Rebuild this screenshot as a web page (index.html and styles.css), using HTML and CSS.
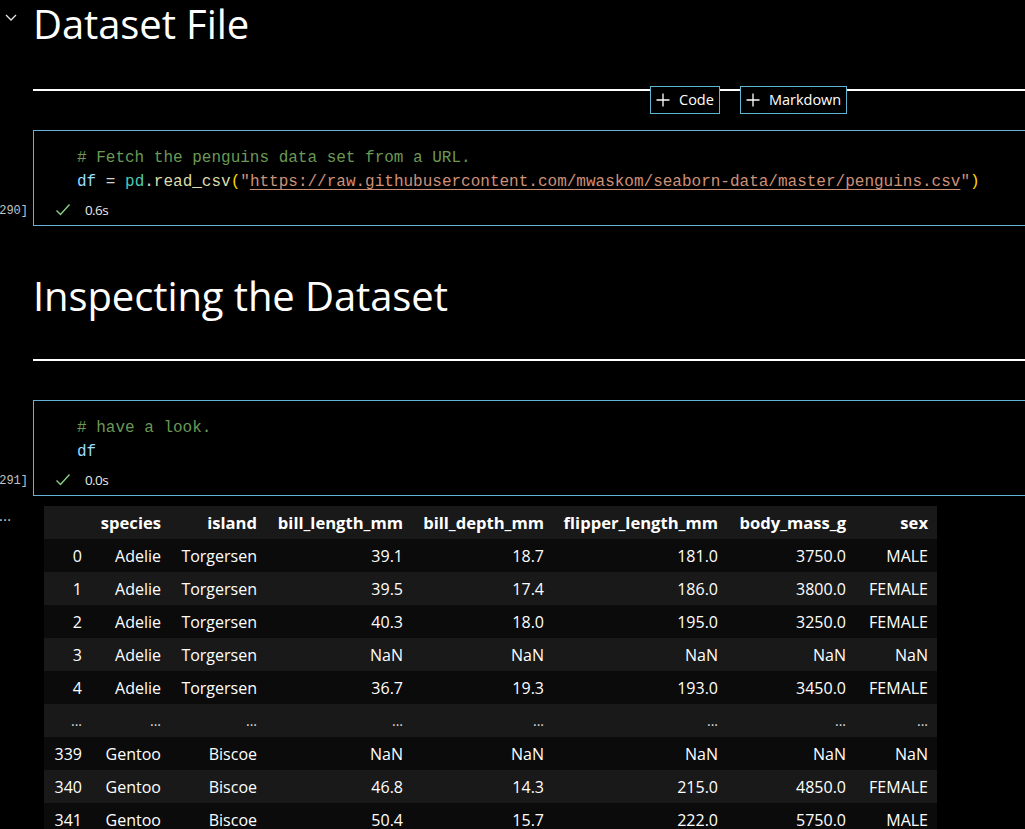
FILE: index.html
```html
<!DOCTYPE html>
<html lang="en">
<head>
<meta charset="utf-8">
<title>Notebook</title>
<link rel="stylesheet" href="styles.css">
</head>
<body>
<main class="notebook">
  <section class="cell md-cell first">
    <div class="gutter">
      <svg class="chevron" width="14" height="10" viewBox="0 0 14 10"><polyline points="2,3 7,8 12,3" fill="none" stroke="#e6e6e6" stroke-width="1.3"/></svg>
    </div>
    <div class="md-body"><h1>Dataset File</h1></div>
    <div class="insert-bar">
      <button class="insert-btn"><svg width="14" height="14" viewBox="0 0 14 14"><path d="M7 0.5V13.5M0.5 7H13.5" stroke="#fff" stroke-width="1.3"/></svg><span>Code</span></button>
      <button class="insert-btn"><svg width="14" height="14" viewBox="0 0 14 14"><path d="M7 0.5V13.5M0.5 7H13.5" stroke="#fff" stroke-width="1.3"/></svg><span>Markdown</span></button>
    </div>
  </section>

  <section class="cell code-cell c1">
    <div class="gutter exec"><span class="count">[290]</span></div>
    <div class="code-box">
      <pre class="code"><span class="cm"># Fetch the penguins data set from a URL.</span>
<span class="var">df</span> <span class="op">=</span> <span class="mod">pd</span><span class="op">.</span><span class="fn">read_csv</span><span class="br">(</span><span class="str">"<u>https://raw.githubusercontent.com/mwaskom/seaborn-data/master/penguins.csv</u>"</span><span class="br">)</span></pre>
      <div class="status"><svg class="check" width="16" height="14" viewBox="0 0 16 14"><polyline points="1.5,7.5 5.5,11.5 14.5,1.5" fill="none" stroke="#89d185" stroke-width="1.4"/></svg><span class="time">0.6s</span></div>
    </div>
  </section>

  <section class="cell md-cell second">
    <div class="gutter"></div>
    <div class="md-body"><h1>Inspecting the Dataset</h1></div>
  </section>

  <section class="cell code-cell c2">
    <div class="gutter exec"><span class="count">[291]</span></div>
    <div class="code-box">
      <pre class="code"><span class="cm"># have a look.</span>
<span class="var">df</span></pre>
      <div class="status"><svg class="check" width="16" height="14" viewBox="0 0 16 14"><polyline points="1.5,7.5 5.5,11.5 14.5,1.5" fill="none" stroke="#89d185" stroke-width="1.4"/></svg><span class="time">0.0s</span></div>
    </div>
  </section>

  <section class="cell output-cell">
    <div class="gutter more">...</div>
    <div class="output">
      <table class="df">
        <colgroup>
          <col style="width:47px"><col style="width:79px"><col style="width:96px"><col style="width:146px"><col style="width:141px"><col style="width:174px"><col style="width:128px"><col style="width:82px">
        </colgroup>
        <thead>
          <tr><th></th><th>species</th><th>island</th><th>bill_length_mm</th><th>bill_depth_mm</th><th>flipper_length_mm</th><th>body_mass_g</th><th>sex</th></tr>
        </thead>
        <tbody>
          <tr><th>0</th><td>Adelie</td><td>Torgersen</td><td>39.1</td><td>18.7</td><td>181.0</td><td>3750.0</td><td>MALE</td></tr>
          <tr><th>1</th><td>Adelie</td><td>Torgersen</td><td>39.5</td><td>17.4</td><td>186.0</td><td>3800.0</td><td>FEMALE</td></tr>
          <tr><th>2</th><td>Adelie</td><td>Torgersen</td><td>40.3</td><td>18.0</td><td>195.0</td><td>3250.0</td><td>FEMALE</td></tr>
          <tr><th>3</th><td>Adelie</td><td>Torgersen</td><td>NaN</td><td>NaN</td><td>NaN</td><td>NaN</td><td>NaN</td></tr>
          <tr><th>4</th><td>Adelie</td><td>Torgersen</td><td>36.7</td><td>19.3</td><td>193.0</td><td>3450.0</td><td>FEMALE</td></tr>
          <tr class="ellipsis"><th>...</th><td>...</td><td>...</td><td>...</td><td>...</td><td>...</td><td>...</td><td>...</td></tr>
          <tr><th>339</th><td>Gentoo</td><td>Biscoe</td><td>NaN</td><td>NaN</td><td>NaN</td><td>NaN</td><td>NaN</td></tr>
          <tr><th>340</th><td>Gentoo</td><td>Biscoe</td><td>46.8</td><td>14.3</td><td>215.0</td><td>4850.0</td><td>FEMALE</td></tr>
          <tr><th>341</th><td>Gentoo</td><td>Biscoe</td><td>50.4</td><td>15.7</td><td>222.0</td><td>5750.0</td><td>MALE</td></tr>
        </tbody>
      </table>
    </div>
  </section>
</main>
</body>
</html>
```

FILE: styles.css
```css
html, body {
  margin: 0;
  padding: 0;
  background: #000;
  color: #fff;
  height: 100%;
  overflow: hidden;
}

body {
  font-family: "Open Sans", "Noto Sans", sans-serif;
}

.notebook {
  display: flex;
  flex-direction: column;
}

.cell {
  display: grid;
  grid-template-columns: 33px 1fr;
  position: relative;
}

.gutter {
  position: relative;
}

.chevron {
  display: block;
  margin: 12px 0 0 4px;
}

.md-body h1 {
  margin: 0;
  font-weight: 400;
  font-size: 40px;
  line-height: 48px;
  color: #fff;
  border-bottom: 2px solid #fff;
  padding-bottom: 41px;
  letter-spacing: -0.1px;
}

.second {
  margin-top: 46px;
}

.second .md-body h1 {
  padding-bottom: 39px;
}

.insert-bar {
  position: absolute;
  top: 86px;
  left: 650px;
  display: flex;
  gap: 20px;
}

.insert-btn {
  display: flex;
  align-items: center;
  gap: 9px;
  height: 28px;
  padding: 0 5px 0 5px;
  background: #000;
  border: 1px solid #5fb3d3;
  color: #fff;
  font-family: "Open Sans", sans-serif;
  font-size: 14.5px;
  line-height: 1;
}

.insert-btn span {
  padding-top: 1px;
}

.code-cell {
  margin-top: 39px;
}

.c2 {
  margin-top: 39px;
}

.code-box {
  border: 1px solid #63b3d6;
  border-right: none;
  padding: 15px 0 4px 43px;
  height: 75px;
}

.code {
  margin: 0;
  font-family: "Liberation Mono", "DejaVu Sans Mono", monospace;
  font-size: 16px;
  line-height: 24px;
  color: #d4d4d4;
  white-space: pre;
}

.cm { color: #6a9955; }
.var { color: #9cdcfe; }
.op { color: #d4d4d4; }
.mod { color: #4ec9b0; }
.fn { color: #dcdcaa; }
.br { color: #ffd700; }
.str { color: #ce9178; }
.str u {
  text-decoration: underline;
  text-decoration-thickness: 1px;
  text-underline-offset: 3px;
}

.status {
  display: flex;
  align-items: center;
  height: 20px;
  margin: 6px 0 0 -22px;
}

.check {
  display: block;
  margin-right: 14px;
}

.time {
  font-size: 13.5px;
  letter-spacing: -0.6px;
  color: #e8e8e8;
}

.exec {
  display: flex;
  justify-content: flex-end;
  align-items: flex-end;
}

.count {
  font-family: "Liberation Mono", "DejaVu Sans Mono", monospace;
  font-size: 12px;
  color: #c4c4c4;
  padding-right: 5px;
  margin-bottom: 8px;
  white-space: nowrap;
}

.output-cell {
  margin-top: 10px;
}

.more {
  font-size: 14px;
  line-height: 14px;
  color: #ccc;
  padding-top: 3px;
  letter-spacing: 0.5px;
  margin-left: -1px;
}

.output {
  padding-left: 11px;
}

.df {
  border-collapse: collapse;
  table-layout: fixed;
  width: 893px;
  font-size: 16px;
  color: #fff;
}

.df th, .df td {
  height: 33px;
  padding: 0 9px 0 0;
  text-align: right;
  white-space: nowrap;
  box-sizing: border-box;
}

.df th {
  font-weight: 400;
}

.df thead th {
  font-weight: 700;
  font-size: 16.6px;
}

.df thead tr {
  background: #191919;
}

.df tbody tr:nth-child(odd) {
  background: #0b0b0b;
}

.df tbody tr:nth-child(even) {
  background: #191919;
}

.df .ellipsis th, .df .ellipsis td {
  font-size: 14px;
  color: #ddd;
}
```
